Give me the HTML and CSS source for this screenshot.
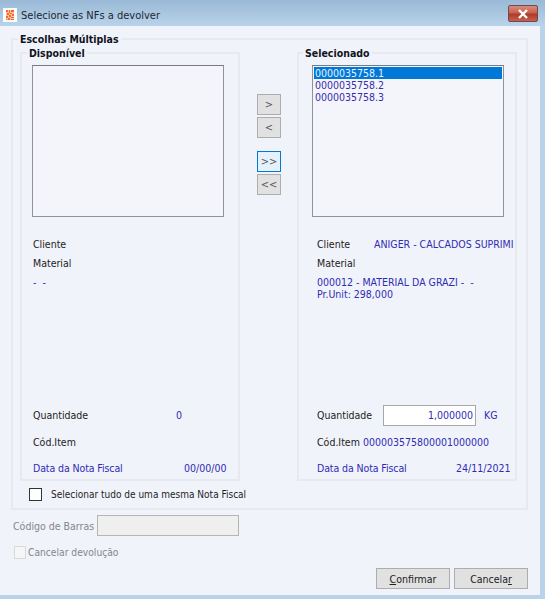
FILE: index.html
```html
<!DOCTYPE html>
<html lang="pt">
<head>
<meta charset="utf-8">
<title>Selecione as NFs a devolver</title>
<link rel="stylesheet" href="styles.css">
</head>
<body>
<div class="window">
  <header class="titlebar">
    <svg class="app-icon" width="14" height="14" viewBox="0 0 14 14">
      <rect width="14" height="14" fill="#fdfdfd"/>
      <rect x="3" y="2" width="8" height="10" fill="#fbc4a4"/>
      <path d="M3 2h2v2H3zM6 2h1v3H6zM8 2h3v2H8zM4 5h2v2H4zM7 5h2v1H7zM9 6h2v2H9zM3 8h2v2H3zM6 7h2v2H6zM8 9h3v1H8zM5 10h2v2H5zM3 11h1v1H3zM8 11h3v1H8z" fill="#f6682c"/>
    </svg>
    <span class="title">Selecione as NFs a devolver</span>
    <button class="close" type="button" aria-label="Fechar">
      <svg width="12" height="10" viewBox="0 0 12 10"><path d="M2 1l8 8M10 1L2 9" stroke="#fff" stroke-width="2.4" fill="none"/></svg>
    </button>
  </header>
  <main class="client">
    <section class="group outer">
      <span class="legend legend-outer">Escolhas Múltiplas</span>
      <div class="columns">
        <section class="group panel">
          <span class="legend legend-inner">Disponível</span>
          <div class="listbox listbox-left"></div>
          <div class="info">
            <div class="row row-cliente"><span class="lbl">Cliente</span></div>
            <div class="row row-material"><span class="lbl">Material</span></div>
            <div class="material blue">- &nbsp;-</div>
            <div class="row row-qtd"><span class="lbl lbl-qtd">Quantidade</span><span class="blue">0</span></div>
            <div class="row row-cod"><span class="lbl">Cód.Item</span></div>
            <div class="row row-data blue"><span class="data-lbl">Data da Nota Fiscal</span><span class="date date-left">00/00/00</span></div>
          </div>
        </section>
        <div class="movers">
          <button class="mv" type="button">&gt;</button>
          <button class="mv" type="button">&lt;</button>
          <button class="mv mv-focus mv-gap" type="button">&gt;&gt;</button>
          <button class="mv" type="button">&lt;&lt;</button>
        </div>
        <section class="group panel panel-right">
          <span class="legend legend-inner">Selecionado</span>
          <div class="listbox listbox-right">
            <div class="opt opt-sel">0000035758.1</div>
            <div class="opt">0000035758.2</div>
            <div class="opt">0000035758.3</div>
          </div>
          <div class="info info-right">
            <div class="row row-cliente"><span class="lbl lbl-cliente">Cliente</span><span class="blue clip">ANIGER - CALCADOS SUPRIMI</span></div>
            <div class="row row-material"><span class="lbl">Material</span></div>
            <div class="material blue">000012 - MATERIAL DA GRAZI - &nbsp;-<br>Pr.Unit: 298,000</div>
            <div class="row row-qtd"><span class="lbl lbl-qtd-r">Quantidade</span><input class="qty" type="text" value="1,000000" readonly><span class="blue unit">KG</span></div>
            <div class="row row-cod"><span class="lbl lbl-cod-r">Cód.Item</span><span class="blue">000003575800001000000</span></div>
            <div class="row row-data blue"><span class="data-lbl">Data da Nota Fiscal</span><span class="date date-right">24/11/2021</span></div>
          </div>
        </section>
      </div>
      <label class="select-all"><span class="check"></span><span>Selecionar tudo de uma mesma Nota Fiscal</span></label>
    </section>
    <div class="barcode"><span class="muted barcode-lbl">Código de Barras</span><span class="barcode-input"></span></div>
    <label class="cancel muted"><span class="check-off"></span><span>Cancelar devolução</span></label>
    <footer class="footer">
      <button class="act" type="button"><u>C</u>onfirmar</button>
      <button class="act" type="button">Cancela<u>r</u></button>
    </footer>
  </main>
</div>
</body>
</html>
```
FILE: styles.css
```css
* { box-sizing: border-box; }
html, body { margin: 0; padding: 0; }
body {
  width: 545px;
  height: 599px;
  overflow: hidden;
  font-family: "DejaVu Sans Condensed", "DejaVu Sans", sans-serif;
  font-stretch: condensed;
  font-size: 10.5px;
  color: #1e1e1e;
}
.window {
  width: 545px;
  height: 599px;
  display: flex;
  flex-direction: column;
  background: #b9d3ea;
}
.titlebar {
  height: 26px;
  flex: none;
  display: flex;
  align-items: center;
  padding: 4px 7px 0 3px;
  background: linear-gradient(#9ab9d6, #b9d3ea);
}
.app-icon { flex: none; }
.title { margin-left: 4px; font-size: 11px; color: #1c2733; }
.close {
  margin-left: auto;
  width: 30px;
  height: 17px;
  margin-top: -3px;
  padding: 0;
  display: flex;
  align-items: center;
  justify-content: center;
  border: 1px solid #6e4a4a;
  border-radius: 2px;
  background: linear-gradient(#d98b7c 0, #c9604f 45%, #b13a29 55%, #c4604e 100%);
}
.client {
  width: 540px;
  height: 569px;
  flex: none;
  padding: 12px 0 0 11px;
  background: #f1f3fa;
}
.group { position: relative; border: 2px solid #e8e9ee; }
.legend {
  position: absolute;
  background: #f1f3fa;
  font-weight: 700;
  color: #10141c;
  line-height: 13px;
  padding: 0 2px;
}
.legend-outer { left: 5px; top: -7px; }
.legend-inner { left: 5px; top: -7px; }
.panel-right .legend-inner { left: 4px; }
.outer { width: 517px; height: 472px; padding: 12px 9px 0 7px; }
.columns { display: flex; height: 429px; }
.panel { width: 220px; height: 429px; padding: 11px 0 0 10px; }
.panel-right { padding-left: 13px; }
.movers {
  width: 57px;
  flex: none;
  display: flex;
  flex-direction: column;
  align-items: center;
  padding: 42px 0 0 1px;
  gap: 2px;
}
.mv {
  width: 24px;
  height: 21px;
  padding: 0;
  font: inherit;
  font-size: 11px;
  color: #555a66;
  background: #e1e1e1;
  border: 1px solid #adadad;
}
.mv-gap { margin-top: 11px; }
.mv-focus { background: #e5f1fb; border: 1px solid #0078d7; }
.listbox { width: 192px; height: 152px; border: 1px solid #8f929a; border-top-color: #767a82; background: #f4f5fb; }
.listbox-right { padding: 1px; }
.opt { height: 12px; line-height: 12px; padding-left: 1px; color: #3a2bb0; }
.opt-sel { background: #0078d7; color: #e8f2ff; }
.blue { color: #2f2bb5; }
.info { margin-left: 1px; }
.info-right { margin-left: 5px; }
.row { display: flex; align-items: center; height: 14px; white-space: nowrap; }
.lbl { color: #222; }
.row-cliente { margin-top: 20px; }
.row-material { margin-top: 5px; }
.material { margin-top: 6px; line-height: 12px; height: 24px; white-space: nowrap; }
.row-qtd { margin-top: 108px; }
.row-cod { margin-top: 13px; }
.row-data { margin-top: 12px; }
.lbl-qtd { width: 143px; flex: none; }
.data-lbl { width: 151px; flex: none; letter-spacing: -0.1px; }
.info-right .data-lbl { width: 139px; }
.lbl-cliente { width: 57px; flex: none; }
.clip { width: 139px; overflow: hidden; }
.lbl-qtd-r { width: 66px; flex: none; }
.qty {
  width: 93px;
  height: 21px;
  flex: none;
  padding: 0 2px;
  text-align: right;
  font: inherit;
  color: #2f2bb5;
  background: #fff;
  border: 1px solid #a8a8a8;
  outline: none;
}
.unit { margin-left: 8px; }
.lbl-cod-r { margin-right: 3px; }
.select-all { display: flex; align-items: center; height: 13px; margin: 7px 0 0 9px; font-size: 10px; }
.check { width: 13px; height: 13px; border: 1px solid #333; background: #fff; margin-right: 9px; flex: none; }
.barcode { display: flex; align-items: center; height: 21px; margin-top: 5px; margin-left: 2px; white-space: nowrap; }
.muted { color: #85868c; }
.barcode-lbl { width: 84px; flex: none; }
.barcode-input { width: 142px; height: 21px; background: #efefef; border: 1px solid #b5b5b5; }
.cancel { display: flex; align-items: center; height: 13px; margin: 10px 0 0 3px; font-size: 10.2px; }
.check-off { width: 12px; height: 13px; border: 1px solid #d9d9d9; background: #f6f6f6; margin-right: 2px; flex: none; }
.footer { display: flex; justify-content: flex-end; gap: 4px; width: 517px; margin-top: 9px; }
.act {
  width: 74px;
  height: 21px;
  padding: 0;
  font: inherit;
  color: #222;
  background: #e1e1e1;
  border: 1px solid #adadad;
}
```
